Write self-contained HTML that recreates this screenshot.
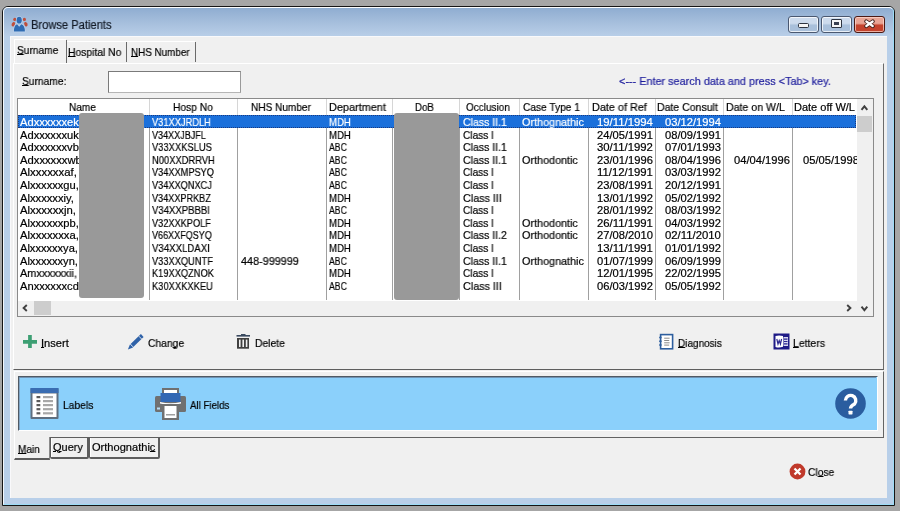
<!DOCTYPE html>
<html><head><meta charset="utf-8"><title>Browse Patients</title>
<style>
html,body{margin:0;padding:0}
body{width:900px;height:511px;position:relative;overflow:hidden;background:#a6a6a6;font-family:"Liberation Sans", sans-serif}
div,span,svg{position:absolute}
.tx{white-space:nowrap;line-height:1;transform-origin:0 0;will-change:transform;-webkit-text-stroke:0.2px currentColor}
u{text-decoration:underline;text-decoration-thickness:1px;text-underline-offset:0px}
</style></head><body>
<div style="position:absolute;left:2px;top:6px;width:893px;height:500px;box-sizing:border-box;border:1px solid #151515;border-radius:6px 6px 0 0;background:#b8cfe9"></div>
<div style="position:absolute;left:3px;top:7px;width:891px;height:498px;box-sizing:border-box;border-top:1px solid #fdfeff;border-left:1px solid #f4f8fc;border-right:1px solid #9cdcf6;border-bottom:1px solid #9cdcf6;border-radius:5px 5px 0 0;background:linear-gradient(#8fadd1 0px,#a5bedc 14px,#b7cde7 27px,#b8cfe9 29px)"></div>
<div style="position:absolute;left:10px;top:36px;width:877px;height:462px;background:#f0f0f0;box-sizing:border-box;border-top:1px solid #f9f9fb;border-left:1px solid #f9f9fb"></div>
<svg style="left:10px;top:13px" width="20" height="20" viewBox="0 0 20 20">
<circle cx="4.8" cy="6.4" r="1.6" fill="#bf4f3c"/>
<circle cx="14.4" cy="6.4" r="1.6" fill="#bf4f3c"/>
<ellipse cx="3.3" cy="11.2" rx="1.6" ry="2.3" fill="#bf4f3c" transform="rotate(25 3.3 11.2)"/>
<ellipse cx="15.9" cy="11.2" rx="1.6" ry="2.3" fill="#bf4f3c" transform="rotate(-25 15.9 11.2)"/>
<path d="M3.9 18.6 Q3.9 11.9 7.1 11.2 L9.2 13.7 L11.3 11.2 Q14.9 11.9 14.9 18.6 Z" fill="#c2d6ee" stroke="#c2d6ee" stroke-width="1.2"/>
<ellipse cx="9.2" cy="7.2" rx="3.3" ry="4" fill="#c2d6ee"/>
<ellipse cx="9.2" cy="7.2" rx="2.6" ry="3.4" fill="#2f6cb3"/>
<path d="M3.9 18.6 Q3.9 11.9 7.1 11.2 L9.2 13.7 L11.3 11.2 Q14.9 11.9 14.9 18.6 Z" fill="#2f6cb3"/>
</svg>
<span class="tx " style="left:31.15px;top:18.64px;transform:scaleX(0.9290);font-size:12px;color:#141c28">Browse Patients</span>
<div style="position:absolute;left:788px;top:16px;width:31px;height:17px;box-sizing:border-box;border:1px solid #4a5870;border-radius:3px;background:linear-gradient(#cddbed 0,#cddbed 42%,#a9c0db 55%,#a9c0db 100%);box-shadow:inset 0 0 0 1px rgba(255,255,255,.75)"></div>
<div style="position:absolute;left:821px;top:16px;width:31px;height:17px;box-sizing:border-box;border:1px solid #4a5870;border-radius:3px;background:linear-gradient(#cddbed 0,#cddbed 42%,#a9c0db 55%,#a9c0db 100%);box-shadow:inset 0 0 0 1px rgba(255,255,255,.75)"></div>
<div style="position:absolute;left:854px;top:16px;width:31px;height:17px;box-sizing:border-box;border:1px solid #4c1a14;border-radius:3px;background:linear-gradient(#e9a595 0,#e9a595 42%,#c4432d 55%,#c4432d 100%);box-shadow:inset 0 0 0 1px rgba(255,220,210,.7)"></div>
<div style="position:absolute;left:798px;top:23px;width:11px;height:5px;box-sizing:border-box;border:1px solid #2e3440;border-radius:1.5px;background:#f6f6f6"></div>
<div style="position:absolute;left:831px;top:19px;width:11px;height:9px;box-sizing:border-box;border:1px solid #2e3440;border-radius:1px;background:#f6f6f6"></div>
<div style="position:absolute;left:834px;top:22px;width:5px;height:3px;background:#3a4050"></div>
<svg style="left:863px;top:19px" width="13" height="11" viewBox="0 0 13 11">
<path d="M3.2 2.3 L9.8 7.2 M9.8 2.3 L3.2 7.2" stroke="#3a1a14" stroke-width="3.8" stroke-linecap="round"/>
<path d="M3.3 2.5 L9.7 7.0 M9.7 2.5 L3.3 7.0" stroke="#ffffff" stroke-width="2.2" stroke-linecap="round"/>
</svg>
<div style="position:absolute;left:13px;top:63px;width:871px;height:307px;box-sizing:border-box;border-top:1px solid #ffffff;border-left:1px solid #ffffff;border-right:1px solid #6b6b6b;border-bottom:1px solid #5e5e5e"></div>
<div style="position:absolute;left:14px;top:39px;width:52px;height:24px;box-sizing:border-box;border-top:1px solid #ffffff;border-left:1px solid #ffffff;background:#f0f0f0"></div>
<div style="position:absolute;left:67px;top:41px;width:128px;height:1px;background:#ffffff"></div>
<div style="position:absolute;left:66px;top:40px;width:1px;height:23px;background:#6a6a6a"></div>
<div style="position:absolute;left:126px;top:42px;width:1px;height:20px;background:#6a6a6a"></div>
<div style="position:absolute;left:195px;top:42px;width:1px;height:20px;background:#6a6a6a"></div>
<span class="tx " style="left:17.39px;top:45.29px;transform:scaleX(0.9270);font-size:11px;color:#000"><u>S</u>urname</span>
<span class="tx " style="left:68.49px;top:46.89px;transform:scaleX(0.9385);font-size:11px;color:#000"><u>H</u>ospital No</span>
<span class="tx " style="left:130.61px;top:46.89px;transform:scaleX(0.8954);font-size:11px;color:#000"><u>N</u>HS Number</span>
<span class="tx " style="left:22.49px;top:76.19px;transform:scaleX(0.9303);font-size:11px;color:#000"><u>S</u>urname:</span>
<div style="position:absolute;left:108px;top:71px;width:133px;height:22px;box-sizing:border-box;border:1px solid #7a7a7a;border-bottom-color:#b5b5b5;border-right-color:#9a9a9a;background:#ffffff"></div>
<span class="tx " style="left:618.57px;top:76.09px;transform:scaleX(0.9868);font-size:11px;color:#1c1c9c">&lt;--- Enter search data and press &lt;Tab&gt; key.</span>
<div style="position:absolute;left:17px;top:98px;width:857px;height:219px;box-sizing:border-box;border:1px solid #8a8a8a;background:#ffffff"></div>
<div style="position:absolute;left:149px;top:99px;width:1px;height:16px;background:#d6d6d6"></div>
<div style="position:absolute;left:237px;top:99px;width:1px;height:16px;background:#d6d6d6"></div>
<div style="position:absolute;left:326px;top:99px;width:1px;height:16px;background:#d6d6d6"></div>
<div style="position:absolute;left:392px;top:99px;width:1px;height:16px;background:#d6d6d6"></div>
<div style="position:absolute;left:459px;top:99px;width:1px;height:16px;background:#d6d6d6"></div>
<div style="position:absolute;left:519px;top:99px;width:1px;height:16px;background:#d6d6d6"></div>
<div style="position:absolute;left:588px;top:99px;width:1px;height:16px;background:#d6d6d6"></div>
<div style="position:absolute;left:655px;top:99px;width:1px;height:16px;background:#d6d6d6"></div>
<div style="position:absolute;left:723px;top:99px;width:1px;height:16px;background:#d6d6d6"></div>
<div style="position:absolute;left:792px;top:99px;width:1px;height:16px;background:#d6d6d6"></div>
<div style="position:absolute;left:149px;top:115px;width:1px;height:185px;background:#a0a0a0"></div>
<div style="position:absolute;left:237px;top:115px;width:1px;height:185px;background:#a0a0a0"></div>
<div style="position:absolute;left:326px;top:115px;width:1px;height:185px;background:#a0a0a0"></div>
<div style="position:absolute;left:392px;top:115px;width:1px;height:185px;background:#a0a0a0"></div>
<div style="position:absolute;left:459px;top:115px;width:1px;height:185px;background:#a0a0a0"></div>
<div style="position:absolute;left:519px;top:115px;width:1px;height:185px;background:#a0a0a0"></div>
<div style="position:absolute;left:588px;top:115px;width:1px;height:185px;background:#a0a0a0"></div>
<div style="position:absolute;left:655px;top:115px;width:1px;height:185px;background:#a0a0a0"></div>
<div style="position:absolute;left:723px;top:115px;width:1px;height:185px;background:#a0a0a0"></div>
<div style="position:absolute;left:792px;top:115px;width:1px;height:185px;background:#a0a0a0"></div>
<div style="position:absolute;left:18px;top:115px;width:838px;height:12.5px;background:#1b70db"></div>
<div style="position:absolute;left:18px;top:115px;width:838px;height:12.5px;box-sizing:border-box;border:1px dotted #1a3a80"></div>
<span class="tx " style="left:68.56px;top:101.99px;transform:scaleX(0.9160);font-size:11px;color:#000">Name</span>
<span class="tx " style="left:172.56px;top:101.99px;transform:scaleX(0.9318);font-size:11px;color:#000">Hosp No</span>
<span class="tx " style="left:250.96px;top:101.99px;transform:scaleX(0.9155);font-size:11px;color:#000">NHS Number</span>
<span class="tx " style="left:328.86px;top:101.99px;transform:scaleX(0.9895);font-size:11px;color:#000">Department</span>
<span class="tx " style="left:415.26px;top:101.99px;transform:scaleX(0.8820);font-size:11px;color:#000">DoB</span>
<span class="tx " style="left:465.86px;top:101.99px;transform:scaleX(0.9085);font-size:11px;color:#000">Occlusion</span>
<span class="tx " style="left:522.56px;top:101.99px;transform:scaleX(0.9239);font-size:11px;color:#000">Case Type 1</span>
<span class="tx " style="left:591.86px;top:101.99px;transform:scaleX(0.9863);font-size:11px;color:#000">Date of Ref</span>
<span class="tx " style="left:657.46px;top:101.99px;transform:scaleX(0.9573);font-size:11px;color:#000">Date Consult</span>
<span class="tx " style="left:726.46px;top:101.99px;transform:scaleX(0.9630);font-size:11px;color:#000">Date on W/L</span>
<span class="tx " style="left:794.46px;top:101.99px;font-size:11px;color:#000">Date off W/L</span>
<span class="tx " style="left:20.05px;top:116.69px;transform:scaleX(1.0138);font-size:11px;color:#ffffff">Adxxxxxxek</span>
<span class="tx " style="left:152.13px;top:116.69px;transform:scaleX(0.8447);font-size:11px;color:#ffffff">V31XXJRDLH</span>
<span class="tx " style="left:329.12px;top:116.69px;transform:scaleX(0.8730);font-size:11px;color:#ffffff">MDH</span>
<span class="tx " style="left:462.58px;top:116.69px;transform:scaleX(0.9568);font-size:11px;color:#ffffff">Class II.1</span>
<span class="tx " style="left:521.57px;top:116.69px;transform:scaleX(0.9825);font-size:11px;color:#ffffff">Orthognathic</span>
<span class="tx " style="left:596.57px;top:116.69px;transform:scaleX(1.0300);font-size:11px;color:#ffffff">19/11/1994</span>
<span class="tx " style="left:664.57px;top:116.69px;transform:scaleX(1.0148);font-size:11px;color:#ffffff">03/12/1994</span>
<span class="tx " style="left:20.05px;top:129.69px;transform:scaleX(1.0138);font-size:11px;color:#000000">Adxxxxxxuk</span>
<span class="tx " style="left:152.14px;top:129.69px;transform:scaleX(0.8236);font-size:11px;color:#000000">V34XXJBJFL</span>
<span class="tx " style="left:329.12px;top:129.69px;transform:scaleX(0.8730);font-size:11px;color:#000000">MDH</span>
<span class="tx " style="left:462.60px;top:129.69px;transform:scaleX(0.9184);font-size:11px;color:#000000">Class I</span>
<span class="tx " style="left:596.57px;top:129.69px;transform:scaleX(1.0148);font-size:11px;color:#000000">24/05/1991</span>
<span class="tx " style="left:664.57px;top:129.69px;transform:scaleX(1.0148);font-size:11px;color:#000000">08/09/1991</span>
<span class="tx " style="left:20.05px;top:141.69px;transform:scaleX(1.0138);font-size:11px;color:#000000">Adxxxxxxvb</span>
<span class="tx " style="left:152.13px;top:141.69px;transform:scaleX(0.8514);font-size:11px;color:#000000">V33XXKSLUS</span>
<span class="tx " style="left:329.15px;top:141.69px;transform:scaleX(0.7903);font-size:11px;color:#000000">ABC</span>
<span class="tx " style="left:462.58px;top:141.69px;transform:scaleX(0.9568);font-size:11px;color:#000000">Class II.1</span>
<span class="tx " style="left:596.57px;top:141.69px;transform:scaleX(1.0300);font-size:11px;color:#000000">30/11/1992</span>
<span class="tx " style="left:664.57px;top:141.69px;transform:scaleX(1.0148);font-size:11px;color:#000000">07/01/1993</span>
<span class="tx " style="left:20.05px;top:154.69px;transform:scaleX(1.0223);font-size:11px;color:#000000">Adxxxxxxwb</span>
<span class="tx " style="left:152.13px;top:154.69px;transform:scaleX(0.8522);font-size:11px;color:#000000">N00XXDRRVH</span>
<span class="tx " style="left:329.15px;top:154.69px;transform:scaleX(0.7903);font-size:11px;color:#000000">ABC</span>
<span class="tx " style="left:462.58px;top:154.69px;transform:scaleX(0.9568);font-size:11px;color:#000000">Class II.1</span>
<span class="tx " style="left:521.57px;top:154.69px;transform:scaleX(0.9825);font-size:11px;color:#000000">Orthodontic</span>
<span class="tx " style="left:596.57px;top:154.69px;transform:scaleX(1.0148);font-size:11px;color:#000000">23/01/1996</span>
<span class="tx " style="left:664.57px;top:154.69px;transform:scaleX(1.0148);font-size:11px;color:#000000">08/04/1996</span>
<span class="tx " style="left:733.57px;top:154.69px;transform:scaleX(1.0148);font-size:11px;color:#000000">04/04/1996</span>
<span class="tx " style="left:802.57px;top:154.69px;transform:scaleX(1.0148);font-size:11px;color:#000000">05/05/1998</span>
<span class="tx " style="left:20.05px;top:166.69px;transform:scaleX(1.0339);font-size:11px;color:#000000">Alxxxxxxaf,</span>
<span class="tx " style="left:152.13px;top:166.69px;transform:scaleX(0.8364);font-size:11px;color:#000000">V34XXMPSYQ</span>
<span class="tx " style="left:329.15px;top:166.69px;transform:scaleX(0.7903);font-size:11px;color:#000000">ABC</span>
<span class="tx " style="left:462.60px;top:166.69px;transform:scaleX(0.9184);font-size:11px;color:#000000">Class I</span>
<span class="tx " style="left:596.57px;top:166.69px;transform:scaleX(1.0300);font-size:11px;color:#000000">11/12/1991</span>
<span class="tx " style="left:664.57px;top:166.69px;transform:scaleX(1.0148);font-size:11px;color:#000000">03/03/1992</span>
<span class="tx " style="left:20.05px;top:179.69px;transform:scaleX(1.0138);font-size:11px;color:#000000">Alxxxxxxgu,</span>
<span class="tx " style="left:152.13px;top:179.69px;transform:scaleX(0.8371);font-size:11px;color:#000000">V34XXQNXCJ</span>
<span class="tx " style="left:329.15px;top:179.69px;transform:scaleX(0.7903);font-size:11px;color:#000000">ABC</span>
<span class="tx " style="left:462.60px;top:179.69px;transform:scaleX(0.9184);font-size:11px;color:#000000">Class I</span>
<span class="tx " style="left:596.57px;top:179.69px;transform:scaleX(1.0148);font-size:11px;color:#000000">23/08/1991</span>
<span class="tx " style="left:664.57px;top:179.69px;transform:scaleX(1.0148);font-size:11px;color:#000000">20/12/1991</span>
<span class="tx " style="left:20.05px;top:192.69px;transform:scaleX(1.0172);font-size:11px;color:#000000">Alxxxxxxiy,</span>
<span class="tx " style="left:152.13px;top:192.69px;transform:scaleX(0.8302);font-size:11px;color:#000000">V34XXPRKBZ</span>
<span class="tx " style="left:329.12px;top:192.69px;transform:scaleX(0.8730);font-size:11px;color:#000000">MDH</span>
<span class="tx " style="left:462.57px;top:192.69px;transform:scaleX(0.9785);font-size:11px;color:#000000">Class III</span>
<span class="tx " style="left:596.57px;top:192.69px;transform:scaleX(1.0148);font-size:11px;color:#000000">13/01/1992</span>
<span class="tx " style="left:664.57px;top:192.69px;transform:scaleX(1.0148);font-size:11px;color:#000000">05/02/1992</span>
<span class="tx " style="left:20.05px;top:204.69px;transform:scaleX(1.0271);font-size:11px;color:#000000">Alxxxxxxjn,</span>
<span class="tx " style="left:152.12px;top:204.69px;transform:scaleX(0.8683);font-size:11px;color:#000000">V34XXPBBBI</span>
<span class="tx " style="left:329.15px;top:204.69px;transform:scaleX(0.7903);font-size:11px;color:#000000">ABC</span>
<span class="tx " style="left:462.60px;top:204.69px;transform:scaleX(0.9184);font-size:11px;color:#000000">Class I</span>
<span class="tx " style="left:596.57px;top:204.69px;transform:scaleX(1.0148);font-size:11px;color:#000000">28/01/1992</span>
<span class="tx " style="left:664.57px;top:204.69px;transform:scaleX(1.0148);font-size:11px;color:#000000">08/03/1992</span>
<span class="tx " style="left:20.05px;top:217.69px;transform:scaleX(1.0138);font-size:11px;color:#000000">Alxxxxxxpb,</span>
<span class="tx " style="left:152.13px;top:217.69px;transform:scaleX(0.8372);font-size:11px;color:#000000">V32XXKPOLF</span>
<span class="tx " style="left:329.12px;top:217.69px;transform:scaleX(0.8730);font-size:11px;color:#000000">MDH</span>
<span class="tx " style="left:462.60px;top:217.69px;transform:scaleX(0.9184);font-size:11px;color:#000000">Class I</span>
<span class="tx " style="left:521.57px;top:217.69px;transform:scaleX(0.9825);font-size:11px;color:#000000">Orthodontic</span>
<span class="tx " style="left:596.57px;top:217.69px;transform:scaleX(1.0300);font-size:11px;color:#000000">26/11/1991</span>
<span class="tx " style="left:664.57px;top:217.69px;transform:scaleX(1.0148);font-size:11px;color:#000000">04/03/1992</span>
<span class="tx " style="left:20.05px;top:229.69px;transform:scaleX(1.0246);font-size:11px;color:#000000">Alxxxxxxxa,</span>
<span class="tx " style="left:152.14px;top:229.69px;transform:scaleX(0.8229);font-size:11px;color:#000000">V66XXFQSYQ</span>
<span class="tx " style="left:329.12px;top:229.69px;transform:scaleX(0.8730);font-size:11px;color:#000000">MDH</span>
<span class="tx " style="left:462.58px;top:229.69px;transform:scaleX(0.9568);font-size:11px;color:#000000">Class II.2</span>
<span class="tx " style="left:521.57px;top:229.69px;transform:scaleX(0.9825);font-size:11px;color:#000000">Orthodontic</span>
<span class="tx " style="left:596.57px;top:229.69px;transform:scaleX(1.0148);font-size:11px;color:#000000">27/08/2010</span>
<span class="tx " style="left:664.57px;top:229.69px;transform:scaleX(1.0300);font-size:11px;color:#000000">02/11/2010</span>
<span class="tx " style="left:20.06px;top:242.69px;transform:scaleX(1.0072);font-size:11px;color:#000000">Alxxxxxxya,</span>
<span class="tx " style="left:152.11px;top:242.69px;transform:scaleX(0.8763);font-size:11px;color:#000000">V34XXLDAXI</span>
<span class="tx " style="left:329.12px;top:242.69px;transform:scaleX(0.8730);font-size:11px;color:#000000">MDH</span>
<span class="tx " style="left:462.60px;top:242.69px;transform:scaleX(0.9184);font-size:11px;color:#000000">Class I</span>
<span class="tx " style="left:596.57px;top:242.69px;transform:scaleX(1.0300);font-size:11px;color:#000000">13/11/1991</span>
<span class="tx " style="left:664.57px;top:242.69px;transform:scaleX(1.0148);font-size:11px;color:#000000">01/01/1992</span>
<span class="tx " style="left:20.06px;top:255.69px;transform:scaleX(1.0072);font-size:11px;color:#000000">Alxxxxxxyn,</span>
<span class="tx " style="left:152.13px;top:255.69px;transform:scaleX(0.8439);font-size:11px;color:#000000">V33XXQUNTF</span>
<span class="tx " style="left:240.57px;top:255.69px;transform:scaleX(0.9855);font-size:11px;color:#000000">448-999999</span>
<span class="tx " style="left:329.15px;top:255.69px;transform:scaleX(0.7903);font-size:11px;color:#000000">ABC</span>
<span class="tx " style="left:462.58px;top:255.69px;transform:scaleX(0.9568);font-size:11px;color:#000000">Class II.1</span>
<span class="tx " style="left:521.57px;top:255.69px;transform:scaleX(0.9825);font-size:11px;color:#000000">Orthognathic</span>
<span class="tx " style="left:596.57px;top:255.69px;transform:scaleX(1.0148);font-size:11px;color:#000000">01/07/1999</span>
<span class="tx " style="left:664.57px;top:255.69px;transform:scaleX(1.0148);font-size:11px;color:#000000">06/09/1999</span>
<span class="tx " style="left:20.06px;top:267.69px;transform:scaleX(0.9900);font-size:11px;color:#000000">Amxxxxxxii,</span>
<span class="tx " style="left:152.13px;top:267.69px;transform:scaleX(0.8435);font-size:11px;color:#000000">K19XXQZNOK</span>
<span class="tx " style="left:329.12px;top:267.69px;transform:scaleX(0.8730);font-size:11px;color:#000000">MDH</span>
<span class="tx " style="left:462.60px;top:267.69px;transform:scaleX(0.9184);font-size:11px;color:#000000">Class I</span>
<span class="tx " style="left:596.57px;top:267.69px;transform:scaleX(1.0148);font-size:11px;color:#000000">12/01/1995</span>
<span class="tx " style="left:664.57px;top:267.69px;transform:scaleX(1.0148);font-size:11px;color:#000000">22/02/1995</span>
<span class="tx " style="left:20.05px;top:280.69px;transform:scaleX(1.0138);font-size:11px;color:#000000">Anxxxxxxcd</span>
<span class="tx " style="left:152.13px;top:280.69px;transform:scaleX(0.8509);font-size:11px;color:#000000">K30XXKXKEU</span>
<span class="tx " style="left:329.15px;top:280.69px;transform:scaleX(0.7903);font-size:11px;color:#000000">ABC</span>
<span class="tx " style="left:462.57px;top:280.69px;transform:scaleX(0.9785);font-size:11px;color:#000000">Class III</span>
<span class="tx " style="left:596.57px;top:280.69px;transform:scaleX(1.0148);font-size:11px;color:#000000">06/03/1992</span>
<span class="tx " style="left:664.57px;top:280.69px;transform:scaleX(1.0148);font-size:11px;color:#000000">05/05/1992</span>
<div style="position:absolute;left:857px;top:99px;width:16px;height:217px;background:#f0f0f0"></div>
<div style="position:absolute;left:857px;top:116px;width:15px;height:16px;background:#cdcdcd"></div>
<svg style="left:859px;top:104px" width="12" height="8" viewBox="0 0 12 8"><path d="M2.5 5.9 L5.4 2.3 L8.3 5.9" fill="none" stroke="#404040" stroke-width="1.9"/></svg>
<svg style="left:859px;top:304px" width="12" height="8" viewBox="0 0 12 8"><path d="M2.5 2.6 L5.4 6.2 L8.3 2.6" fill="none" stroke="#404040" stroke-width="1.9"/></svg>
<div style="position:absolute;left:18px;top:301px;width:839px;height:15px;background:#f0f0f0"></div>
<div style="position:absolute;left:34px;top:301px;width:17px;height:14px;background:#cdcdcd"></div>
<svg style="left:21px;top:302px" width="8" height="12" viewBox="0 0 8 12"><path d="M5.8 3 L2.6 6 L5.8 9" fill="none" stroke="#404040" stroke-width="1.9"/></svg>
<svg style="left:845px;top:302px" width="8" height="12" viewBox="0 0 8 12"><path d="M2.2 3 L5.4 6 L2.2 9" fill="none" stroke="#404040" stroke-width="1.9"/></svg>
<div style="position:absolute;left:17px;top:316px;width:857px;height:1px;background:#8a8a8a"></div>
<div style="position:absolute;left:873px;top:98px;width:1px;height:219px;background:#8a8a8a"></div>
<div style="position:absolute;left:79px;top:113px;width:65px;height:185px;background:#999999;border-radius:3px"></div>
<div style="position:absolute;left:394px;top:113px;width:65px;height:187px;background:#999999;border-radius:3px"></div>
<svg style="left:23px;top:335px" width="14" height="13" viewBox="0 0 14 13"><path d="M5.1 0 H8.8 V4.9 H14 V8.8 H8.8 V13 H5.1 V8.8 H0 V4.9 H5.1 Z" fill="#3d9f73"/></svg>
<span class="tx " style="left:41.36px;top:337.89px;transform:scaleX(1.0090);font-size:11px;color:#000"><u>I</u>nsert</span>
<svg style="left:127px;top:333px" width="18" height="17" viewBox="0 0 18 17">
<path d="M13.9 1.1 L16.6 4.0 L5.5 14.7 L0.9 16.6 L2.8 11.8 Z" fill="#2f62a8"/>
<path d="M11.9 3.2 L14.6 6.0" stroke="#f0f0f0" stroke-width="0.9"/>
<path d="M3.2 10.9 L5.9 13.8" stroke="#e8f2ff" stroke-width="0.9"/>
</svg>
<span class="tx " style="left:147.59px;top:337.99px;transform:scaleX(0.9360);font-size:11px;color:#000">Chan<u>g</u>e</span>
<svg style="left:236px;top:334px" width="15" height="15" viewBox="0 0 15 15">
<rect x="0.5" y="1" width="13.5" height="1.6" fill="#3a4a60"/>
<rect x="5" y="0" width="4.5" height="1.2" fill="#3a4a60"/>
<rect x="1" y="4" width="12" height="10.7" fill="#404040"/>
<rect x="3" y="5.6" width="1.6" height="7.4" fill="#f0f0f0"/>
<rect x="6.4" y="5.6" width="1.6" height="7.4" fill="#f0f0f0"/>
<rect x="9.8" y="5.6" width="1.6" height="7.4" fill="#f0f0f0"/>
</svg>
<span class="tx " style="left:254.59px;top:338.19px;transform:scaleX(0.9397);font-size:11px;color:#000">Delete</span>
<svg style="left:657px;top:333px" width="17" height="17" viewBox="0 0 17 17">
<rect x="3.6" y="1.6" width="12" height="14.2" fill="#ffffff" stroke="#2d5e9e" stroke-width="1.6"/>
<path d="M7.2 5.2 H12.6 M7.2 7.5 H12.2 M7.2 9.8 H12.6 M7.2 12.1 H12.2" stroke="#8a8a8a" stroke-width="1"/>
<path d="M2.2 4.4 H4.6 M2.2 8.2 H4.6 M2.2 12 H4.6" stroke="#2d5e9e" stroke-width="1.5"/>
</svg>
<span class="tx " style="left:677.60px;top:337.79px;transform:scaleX(0.9083);font-size:11px;color:#000"><u>D</u>iagnosis</span>
<svg style="left:773px;top:333px" width="17" height="17" viewBox="0 0 17 17">
<rect x="0.5" y="0.5" width="16" height="16" fill="#1e1a86"/>
<path d="M2.5 3 Q6 1.8 10 3 V13.8 Q6 15.2 2.5 14 Z" fill="#ffffff"/>
<rect x="10.5" y="4" width="4.5" height="9" fill="#d8d8f0"/>
<path d="M11 6.2 H14.5 M11 8.5 H14.5 M11 10.8 H14.5" stroke="#2a2690" stroke-width="1.2"/>
<path d="M3.8 6 L5 11 L6.2 7.5 L7.4 11 L8.6 6" fill="none" stroke="#2a2690" stroke-width="1.2"/>
</svg>
<span class="tx " style="left:792.88px;top:337.79px;transform:scaleX(0.9506);font-size:11px;color:#000"><u>L</u>etters</span>
<div style="position:absolute;left:14px;top:371px;width:870px;height:67px;box-sizing:border-box;border-top:1px solid #ffffff;border-left:1px solid #ffffff;border-right:1px solid #646464;border-bottom:1px solid #5a5a5a"></div>
<div style="position:absolute;left:18px;top:376px;width:860px;height:55px;box-sizing:border-box;border-top:1px solid #505a64;border-left:1px solid #505a64;border-right:1px solid #ffffff;border-bottom:1px solid #ffffff;background:#8bd0fb"></div>
<div style="position:absolute;left:19px;top:377px;width:1px;height:53px;background:#7fa6c8"></div>
<div style="position:absolute;left:19px;top:377px;width:857px;height:1px;background:#6f93b4"></div>
<svg style="left:30px;top:388px" width="29" height="31" viewBox="0 0 29 31">
<rect x="0.5" y="0" width="28" height="31" fill="#5f6f80" rx="1"/>
<rect x="0.5" y="0" width="28" height="5" fill="#3a6db2"/>
<rect x="2.5" y="5.5" width="24" height="23.5" fill="#ffffff"/>
<g fill="#5a5a5a"><rect x="6.5" y="8" width="3.8" height="2.2"/><rect x="6.5" y="12" width="3.8" height="2.2"/><rect x="6.5" y="16" width="3.8" height="2.2"/><rect x="6.5" y="20.1" width="3.8" height="2.2"/><rect x="6.5" y="24.2" width="3.8" height="2.2"/></g>
<g fill="#a8a8a8"><rect x="13" y="8" width="10" height="2.2"/><rect x="13" y="12" width="10" height="2.2"/><rect x="13" y="16" width="10" height="2.2"/><rect x="13" y="20.1" width="10" height="2.2"/><rect x="13" y="24.2" width="10" height="2.2"/></g>
</svg>
<span class="tx " style="left:62.89px;top:399.89px;transform:scaleX(0.9370);font-size:11px;color:#000">Labels</span>
<svg style="left:155px;top:388px" width="32" height="32" viewBox="0 0 32 32">
<rect x="7" y="0" width="17" height="9" fill="#707070"/>
<rect x="9" y="2" width="13" height="5" fill="#ffffff"/>
<rect x="0" y="8" width="31" height="16" rx="1.5" fill="#707070"/>
<path d="M5.5 5 H25.5 V14 H5.5 Z" fill="#3268b4"/>
<path d="M5 14 Q15.5 16.5 26 14 V15.5 Q15.5 18 5 15.5 Z" fill="#ffffff"/>
<rect x="2" y="19.5" width="3" height="2" fill="#b9dcf2"/>
<rect x="7" y="16" width="17" height="16" fill="#707070"/>
<rect x="9.5" y="18" width="12" height="12" fill="#ffffff"/>
<rect x="11" y="26" width="9" height="1.5" fill="#a0a0a0"/>
</svg>
<span class="tx " style="left:189.61px;top:399.99px;transform:scaleX(0.8825);font-size:11px;color:#000">All Fields</span>
<svg style="left:835px;top:388px" width="31" height="31" viewBox="0 0 31 31">
<circle cx="15.5" cy="15.5" r="15.3" fill="#2a5d9f"/>
<path d="M10.4 12.6 A5.2 5.2 0 1 1 19.6 15.9 Q15.5 18 15.5 20.6" fill="none" stroke="#ffffff" stroke-width="3.4"/>
<rect x="13.5" y="22.7" width="4" height="3.7" rx="0.6" fill="#ffffff"/>
</svg>
<div style="position:absolute;left:50px;top:437px;width:834px;height:1px;background:#626262"></div>
<div style="position:absolute;left:14px;top:437px;width:36px;height:23px;box-sizing:border-box;border-left:1px solid #ffffff;border-bottom:2px solid #5c5c5c;border-right:1px solid #8a8a8a;background:#f0f0f0"></div>
<div style="position:absolute;left:50px;top:437px;width:39px;height:22px;box-sizing:border-box;border:2px solid #5e5e5e;border-top-width:1px;border-left-width:1px;border-radius:0 0 2px 2px;box-shadow:inset 1px 0 0 #ffffff;background:#f0f0f0"></div>
<div style="position:absolute;left:89px;top:437px;width:71px;height:22px;box-sizing:border-box;border:2px solid #5e5e5e;border-top-width:1px;border-left-width:1px;border-radius:0 0 2px 2px;box-shadow:inset 1px 0 0 #ffffff;background:#f0f0f0"></div>
<span class="tx " style="left:17.60px;top:444.19px;transform:scaleX(0.9128);font-size:11px;color:#000"><u>M</u>ain</span>
<span class="tx " style="left:52.66px;top:441.89px;transform:scaleX(0.9937);font-size:11px;color:#000"><u>Q</u>uery</span>
<span class="tx " style="left:91.56px;top:441.99px;transform:scaleX(1.0063);font-size:11px;color:#000">Orthognathi<u>c</u></span>
<svg style="left:789px;top:463px" width="17" height="17" viewBox="0 0 17 17">
<circle cx="8.5" cy="8.5" r="7.9" fill="#c0392b"/>
<path d="M5.5 5.5 L11.5 11.5 M11.5 5.5 L5.5 11.5" stroke="#ffffff" stroke-width="2.3"/>
</svg>
<span class="tx " style="left:808.19px;top:467.09px;transform:scaleX(0.9339);font-size:11px;color:#000">Cl<u>o</u>se</span>
</body></html>
